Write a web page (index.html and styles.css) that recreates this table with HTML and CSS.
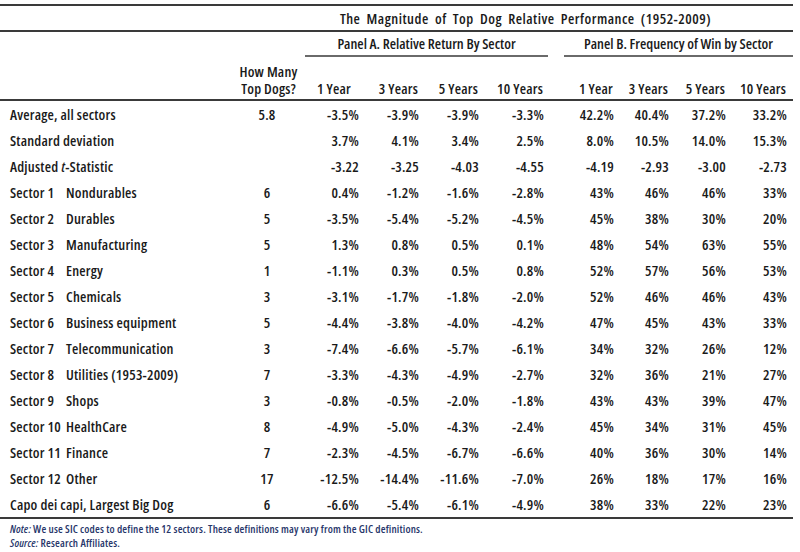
FILE: index.html
```html
<!DOCTYPE html>
<html>
<head>
<meta charset="utf-8">
<link rel="stylesheet" href="styles.css">
</head>
<body>
<div class="table">
  <div class="title-row"><span class="title">The Magnitude of Top Dog Relative Performance (1952-2009)</span></div>
  <div class="row panel-row">
    <div class="panel panel-a"><span>Panel A. Relative Return By Sector</span></div>
    <div class="panel panel-b"><span>Panel B. Frequency of Win by Sector</span></div>
  </div>
  <div class="row head-row">
    <div class="c-label"></div>
    <div class="c-dogs"><div>How Many</div><div>Top Dogs?</div></div>
    <div class="c-num h-a1">1 Year</div>
    <div class="c-num">3 Years</div>
    <div class="c-num">5 Years</div>
    <div class="c-num">10 Years</div>
    <div class="c-gap"></div>
    <div class="c-num">1 Year</div>
    <div class="c-num">3 Years</div>
    <div class="c-num">5 Years</div>
    <div class="c-num">10 Years</div>
  </div>

  <div class="row"><div class="c-label">Average, all sectors</div><div class="c-dogs">5.8</div><div class="c-num">-3.5%</div><div class="c-num">-3.9%</div><div class="c-num">-3.9%</div><div class="c-num">-3.3%</div><div class="c-gap"></div><div class="c-num">42.2%</div><div class="c-num">40.4%</div><div class="c-num">37.2%</div><div class="c-num">33.2%</div></div>
  <div class="row"><div class="c-label">Standard deviation</div><div class="c-dogs"></div><div class="c-num">3.7%</div><div class="c-num">4.1%</div><div class="c-num">3.4%</div><div class="c-num">2.5%</div><div class="c-gap"></div><div class="c-num">8.0%</div><div class="c-num">10.5%</div><div class="c-num">14.0%</div><div class="c-num">15.3%</div></div>
  <div class="row"><div class="c-label">Adjusted <i>t</i>-Statistic</div><div class="c-dogs"></div><div class="c-num">-3.22</div><div class="c-num">-3.25</div><div class="c-num">-4.03</div><div class="c-num">-4.55</div><div class="c-gap"></div><div class="c-num">-4.19</div><div class="c-num">-2.93</div><div class="c-num">-3.00</div><div class="c-num">-2.73</div></div>
  <div class="row"><div class="c-label"><span class="sec">Sector 1</span>Nondurables</div><div class="c-dogs">6</div><div class="c-num">0.4%</div><div class="c-num">-1.2%</div><div class="c-num">-1.6%</div><div class="c-num">-2.8%</div><div class="c-gap"></div><div class="c-num">43%</div><div class="c-num">46%</div><div class="c-num">46%</div><div class="c-num">33%</div></div>
  <div class="row"><div class="c-label"><span class="sec">Sector 2</span>Durables</div><div class="c-dogs">5</div><div class="c-num">-3.5%</div><div class="c-num">-5.4%</div><div class="c-num">-5.2%</div><div class="c-num">-4.5%</div><div class="c-gap"></div><div class="c-num">45%</div><div class="c-num">38%</div><div class="c-num">30%</div><div class="c-num">20%</div></div>
  <div class="row"><div class="c-label"><span class="sec">Sector 3</span>Manufacturing</div><div class="c-dogs">5</div><div class="c-num">1.3%</div><div class="c-num">0.8%</div><div class="c-num">0.5%</div><div class="c-num">0.1%</div><div class="c-gap"></div><div class="c-num">48%</div><div class="c-num">54%</div><div class="c-num">63%</div><div class="c-num">55%</div></div>
  <div class="row"><div class="c-label"><span class="sec">Sector 4</span>Energy</div><div class="c-dogs">1</div><div class="c-num">-1.1%</div><div class="c-num">0.3%</div><div class="c-num">0.5%</div><div class="c-num">0.8%</div><div class="c-gap"></div><div class="c-num">52%</div><div class="c-num">57%</div><div class="c-num">56%</div><div class="c-num">53%</div></div>
  <div class="row"><div class="c-label"><span class="sec">Sector 5</span>Chemicals</div><div class="c-dogs">3</div><div class="c-num">-3.1%</div><div class="c-num">-1.7%</div><div class="c-num">-1.8%</div><div class="c-num">-2.0%</div><div class="c-gap"></div><div class="c-num">52%</div><div class="c-num">46%</div><div class="c-num">46%</div><div class="c-num">43%</div></div>
  <div class="row"><div class="c-label"><span class="sec">Sector 6</span>Business equipment</div><div class="c-dogs">5</div><div class="c-num">-4.4%</div><div class="c-num">-3.8%</div><div class="c-num">-4.0%</div><div class="c-num">-4.2%</div><div class="c-gap"></div><div class="c-num">47%</div><div class="c-num">45%</div><div class="c-num">43%</div><div class="c-num">33%</div></div>
  <div class="row"><div class="c-label"><span class="sec">Sector 7</span>Telecommunication</div><div class="c-dogs">3</div><div class="c-num">-7.4%</div><div class="c-num">-6.6%</div><div class="c-num">-5.7%</div><div class="c-num">-6.1%</div><div class="c-gap"></div><div class="c-num">34%</div><div class="c-num">32%</div><div class="c-num">26%</div><div class="c-num">12%</div></div>
  <div class="row"><div class="c-label"><span class="sec">Sector 8</span>Utilities (1953-2009)</div><div class="c-dogs">7</div><div class="c-num">-3.3%</div><div class="c-num">-4.3%</div><div class="c-num">-4.9%</div><div class="c-num">-2.7%</div><div class="c-gap"></div><div class="c-num">32%</div><div class="c-num">36%</div><div class="c-num">21%</div><div class="c-num">27%</div></div>
  <div class="row"><div class="c-label"><span class="sec">Sector 9</span>Shops</div><div class="c-dogs">3</div><div class="c-num">-0.8%</div><div class="c-num">-0.5%</div><div class="c-num">-2.0%</div><div class="c-num">-1.8%</div><div class="c-gap"></div><div class="c-num">43%</div><div class="c-num">43%</div><div class="c-num">39%</div><div class="c-num">47%</div></div>
  <div class="row"><div class="c-label"><span class="sec">Sector 10</span>HealthCare</div><div class="c-dogs">8</div><div class="c-num">-4.9%</div><div class="c-num">-5.0%</div><div class="c-num">-4.3%</div><div class="c-num">-2.4%</div><div class="c-gap"></div><div class="c-num">45%</div><div class="c-num">34%</div><div class="c-num">31%</div><div class="c-num">45%</div></div>
  <div class="row"><div class="c-label"><span class="sec">Sector 11</span>Finance</div><div class="c-dogs">7</div><div class="c-num">-2.3%</div><div class="c-num">-4.5%</div><div class="c-num">-6.7%</div><div class="c-num">-6.6%</div><div class="c-gap"></div><div class="c-num">40%</div><div class="c-num">36%</div><div class="c-num">30%</div><div class="c-num">14%</div></div>
  <div class="row"><div class="c-label"><span class="sec">Sector 12</span>Other</div><div class="c-dogs">17</div><div class="c-num">-12.5%</div><div class="c-num">-14.4%</div><div class="c-num">-11.6%</div><div class="c-num">-7.0%</div><div class="c-gap"></div><div class="c-num">26%</div><div class="c-num">18%</div><div class="c-num">17%</div><div class="c-num">16%</div></div>
  <div class="row last"><div class="c-label">Capo dei capi, Largest Big Dog</div><div class="c-dogs">6</div><div class="c-num">-6.6%</div><div class="c-num">-5.4%</div><div class="c-num">-6.1%</div><div class="c-num">-4.9%</div><div class="c-gap"></div><div class="c-num">38%</div><div class="c-num">33%</div><div class="c-num">22%</div><div class="c-num">23%</div></div>
</div>
<div class="notes">
  <div><i>Note:</i> We use SIC codes to define the 12 sectors. These definitions may vary from the GIC definitions.</div>
  <div><i>Source:</i> Research Affiliates.</div>
</div>
</body>
</html>
```

FILE: styles.css
```css
html, body {
  margin: 0;
  padding: 0;
  background: #ffffff;
}
body {
  font-family: "Open Sans", "DejaVu Sans Condensed", sans-serif;
  font-stretch: 75%;
  font-weight: 560;
  font-size: 14.5px;
  letter-spacing: 0.2px;
  color: #1a1a1a;
}
.table {
  width: 793px;
  margin-top: 4px;
  border-top: 2px solid #3a3a3a;
  border-bottom: 2px solid #3a3a3a;
}
.title-row {
  height: 24px;
  border-bottom: 2px solid #3a3a3a;
  display: flex;
  align-items: center;
  justify-content: center;
  padding-left: 300px;
  padding-right: 42px;
}
.title {
  letter-spacing: 0.5px;
  word-spacing: 3px;
}
.row {
  display: grid;
  grid-template-columns: 230px 70px 65px 60px 60px 65px 14px 56px 55px 57px 61px;
  height: 26px;
  align-items: center;
}
.panel-row {
  grid-template-columns: 300px 250px 14px 229px;
}
.panel {
  align-self: stretch;
  display: flex;
}
.panel span {
  flex: 1;
  display: flex;
  align-items: center;
  justify-content: center;
  border-bottom: 2px solid #6a6a6a;
  margin-bottom: 1px;
  letter-spacing: 0;
}
.panel-a {
  grid-column: 2;
}
.panel-a span {
  margin-left: 5px;
  margin-right: 2px;
}
.panel-b {
  grid-column: 4;
}
.head-row {
  box-sizing: border-box;
  height: 43px;
  align-items: end;
  border-bottom: 2px solid #3a3a3a;
  line-height: 17px;
  padding-bottom: 2px;
}
.c-label {
  padding-left: 10px;
  white-space: nowrap;
}
.sec {
  display: inline-block;
  width: 56px;
}
.c-dogs {
  text-align: center;
  padding-left: 4px;
  white-space: nowrap;
}
.head-row .c-dogs {
  padding-left: 7px;
}
.c-num {
  text-align: right;
  padding-right: 6px;
  white-space: nowrap;
}
.head-row .c-num {
  padding-right: 7px;
}
.head-row .h-a1 {
  padding-right: 14px;
}
.notes {
  margin-top: 3px;
  padding-left: 10px;
  font-size: 11px;
  letter-spacing: 0.15px;
  line-height: 14px;
  color: #27366a;
}
```
